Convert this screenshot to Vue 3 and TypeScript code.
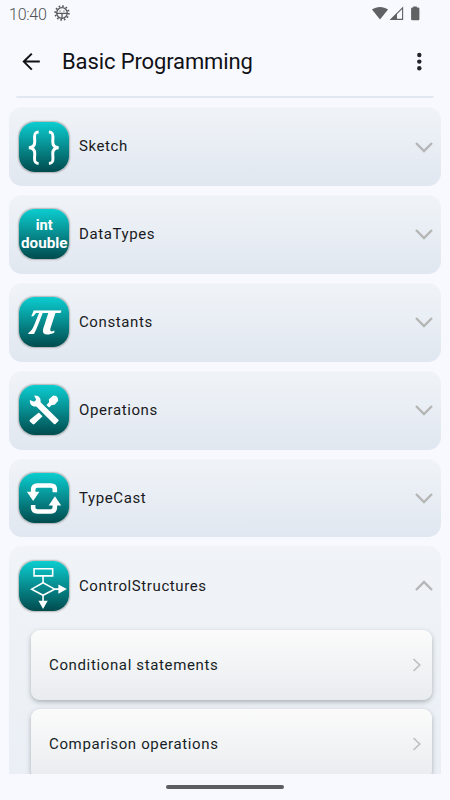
<script setup lang="ts">
import { ref } from 'vue'

type IconName = 'braces' | 'types' | 'pi' | 'tools' | 'cast' | 'flow'

interface Section {
  title: string
  icon: IconName
  items: string[]
}

const sections: Section[] = [
  { title: 'Sketch', icon: 'braces', items: [] },
  { title: 'DataTypes', icon: 'types', items: [] },
  { title: 'Constants', icon: 'pi', items: [] },
  { title: 'Operations', icon: 'tools', items: [] },
  { title: 'TypeCast', icon: 'cast', items: [] },
  {
    title: 'ControlStructures',
    icon: 'flow',
    items: ['Conditional statements', 'Comparison operations'],
  },
]

const open = ref<string>('ControlStructures')

function toggle(title: string): void {
  open.value = open.value === title ? '' : title
}
</script>

<template>
  <div class="screen">
    <div class="status">
      <span class="time">10:40</span>
      <svg class="gear" width="16" height="16" viewBox="0 0 16 16">
        <circle cx="8" cy="8" r="6.8" class="teeth" />
        <circle cx="8" cy="8" r="5.3" class="ring" />
        <path d="M2.7 8.3H13.3M8 8.3V13.3" class="ring" />
        <path d="M5.6 6.2h.9M9.5 6.2h.9" class="ring" />
      </svg>
      <svg class="signals" width="50" height="16" viewBox="0 0 50 16">
        <path d="M0 3.6C4.5 .1 11.5 .1 16 3.6L8 13.6Z" class="solid" />
        <path d="M30.6 1.8V13.4H19Z" class="outline" />
        <path d="M18.2 13.8L25 7V13.8Z" class="solid" />
        <path d="M41.2 1.5V.4H44.8V1.5H46.2Q47.4 1.5 47.4 2.7V13Q47.4 14.2 46.2 14.2H40.3Q39.1 14.2 39.1 13V2.7Q39.1 1.5 40.3 1.5Z" class="solid" />
      </svg>
    </div>

    <header class="bar">
      <svg class="back" width="20" height="20" viewBox="0 0 20 20">
        <path d="M18.8 9.6H2.8M10.8 1.6L2.8 9.6L10.8 17.6" />
      </svg>
      <h1>Basic Programming</h1>
      <svg class="more" width="6" height="20" viewBox="0 0 6 20">
        <circle cx="3.3" cy="3" r="2.2" />
        <circle cx="3.3" cy="9.6" r="2.2" />
        <circle cx="3.3" cy="16.2" r="2.2" />
      </svg>
    </header>

    <main class="list">
      <div class="edge"></div>
      <section v-for="s in sections" :key="s.title" class="card" :class="{ expanded: open === s.title }">
        <div class="head" @click="toggle(s.title)">
          <div class="tile">
            <svg width="50" height="50" viewBox="0 0 50.5 50.5">
              <g v-if="s.icon === 'braces'" class="brace">
                <path d="M19.8 10C16.3 10.3 15.6 12 15.7 15.2L15.9 20C16 24 14 25.8 10 26C14 26.2 16 28 15.9 32L15.7 36.8C15.6 40 16.3 41.7 19.8 42" />
                <path d="M30.2 10C33.7 10.3 34.4 12 34.3 15.2L34.1 20C34 24 36 25.8 40 26C36 26.2 34 28 34.1 32L34.3 36.8C34.4 40 33.7 41.7 30.2 42" />
              </g>
              <g v-else-if="s.icon === 'types'" class="words">
                <text x="25.5" y="21.4">int</text>
                <text x="25.5" y="39" textLength="47" lengthAdjust="spacingAndGlyphs">double</text>
              </g>
              <text v-else-if="s.icon === 'pi'" class="pi" transform="translate(23.6 37.8) skewX(-8) scale(1.04 1)">π</text>
              <g v-else-if="s.icon === 'tools'">
                <path class="fill" d="M11 15.2L15.3 17L17.4 14.8L15.4 10.8C19.5 10.2 22.4 13.2 21.8 17.4L39.8 35.2Q40.4 35.8 39.8 36.4L36.8 39.4Q36 40 35.3 39.4L17.5 21.7C13.6 22.5 10.4 19.3 11 15.2Z" />
                <path class="fill" d="M20 27.8L23.8 31.6L15.6 39.4Q14.6 40.2 13.7 39.4L11 36.8Q10.2 36 11 35.1Z" />
                <path class="fill" d="M27.7 20.2L30.4 17.3L30.2 14.3L34.6 10.7L37.6 11.1L39.2 13.1L39.6 15.8L36 20L33 20.1L30.4 22.8Z" />
              </g>
              <g v-else-if="s.icon === 'cast'">
                <path class="loop" d="M14.3 20V17Q14.3 12.7 18.6 12.7H32.2Q36.2 12.7 36.2 16.6V19.4" />
                <path class="loop" d="M36.2 32V34.7Q36.2 38.8 32.2 38.8H18.6Q14.3 38.8 14.3 35V32.4" />
                <path class="fill" d="M8 19H20.6L14.3 28.4Z" />
                <path class="fill" d="M30 32.8H42.6L36.3 23.4Z" />
              </g>
              <g v-else>
                <path class="line" d="M15.2 7.8H34V15H15.2ZM24.3 15V22L36 28.4L24.3 34.6L12.8 28.4L24.3 22M36 28.4H41M24.3 34.6V41" />
                <path class="fill" d="M39.8 23.7L48.3 28.4L39.8 33.1Z" />
                <path class="fill" d="M19.6 40.2H29L24.3 48.6Z" />
              </g>
            </svg>
          </div>
          <h2>{{ s.title }}</h2>
          <svg class="chevron" width="20" height="12" viewBox="0 0 20 12">
            <path :d="open === s.title ? 'M2 10L10 2L18 10' : 'M2 2L10 10L18 2'" />
          </svg>
        </div>
        <div v-if="open === s.title" class="items">
          <div v-for="item in s.items" :key="item" class="item">
            <span>{{ item }}</span>
            <svg class="next" width="10" height="14" viewBox="0 0 10 14">
              <path d="M1.5 1L7.7 7L1.5 13" />
            </svg>
          </div>
        </div>
      </section>
    </main>

    <footer class="nav"><div class="pill"></div></footer>
  </div>
</template>

<style>
body {
  margin: 0;
  background: #f8f9ff;
}
</style>

<style scoped>
.screen {
  display: flex;
  flex-direction: column;
  width: 450px;
  height: 800px;
  overflow: hidden;
  background: #f8f9ff;
  font-family: Roboto, "Liberation Sans", sans-serif;
  color: #191a22;
}
svg {
  display: block;
  fill: none;
  overflow: visible;
}
.status {
  display: flex;
  align-items: center;
  flex: none;
  height: 27px;
  padding: 0 28px 1px 9px;
  box-sizing: border-box;
  color: #505154;
}
.time {
  width: 45px;
  padding-top: 2px;
  font-size: 16px;
  font-weight: 350;
  letter-spacing: -0.25px;
}
.ring {
  stroke: #56575a;
  stroke-width: 1.3;
}
.teeth {
  stroke: #56575a;
  stroke-width: 1.8;
  stroke-dasharray: 1.6 1.96;
}
.signals {
  margin: 1px 0 0 auto;
}
.solid {
  fill: #606163;
}
.outline {
  stroke: #606163;
  stroke-width: 1.1;
}
.bar {
  display: flex;
  align-items: center;
  flex: none;
  height: 69px;
  padding: 0 28px 0 21px;
  box-sizing: border-box;
}
.back path {
  stroke: #101116;
  stroke-width: 2;
}
h1 {
  margin: 0 0 0 21px;
  font-size: 22px;
  font-weight: 370;
  line-height: 28px;
  letter-spacing: -0.12px;
  white-space: nowrap;
  color: #101116;
}
.more {
  margin-left: auto;
  fill: #23232c;
}
.list {
  display: flex;
  flex-direction: column;
  gap: 9px;
  flex: none;
  height: 678px;
  padding: 0 9px;
  box-sizing: border-box;
  overflow: hidden;
}
.edge {
  flex: none;
  height: 2px;
  margin: 0 7px;
  border-radius: 0 0 6px 6px;
  background: #e2e8f1;
}
.card {
  flex: none;
  height: 78.9px;
  border-radius: 13px;
  background: linear-gradient(#f0f4f8, #e1e7f0);
}
.card.expanded {
  height: 620px;
}
.head {
  display: flex;
  align-items: center;
  height: 79px;
  padding: 0 7px 0 10px;
}
.card.expanded .head {
  height: 80px;
}
.tile {
  width: 50px;
  height: 50px;
  border-radius: 16px;
  background: linear-gradient(#0bcdd0, #07898c 52%, #004b4e);
  box-shadow: 0 0 1.5px 0.5px rgba(90, 85, 80, 0.4);
}
.brace path {
  stroke: #fff;
  stroke-width: 3;
}
.words text {
  fill: #fff;
  font-size: 14.8px;
  font-weight: 700;
  text-anchor: middle;
}
.pi {
  fill: #fff;
  font-family: "Liberation Serif", serif;
  font-size: 52px;
  font-style: italic;
  font-weight: 700;
  text-anchor: middle;
}
.fill {
  fill: #fff;
}
.loop {
  stroke: #fff;
  stroke-width: 4.6;
}
.line {
  stroke: #fff;
  stroke-width: 1.6;
}
h2 {
  margin: 0 0 1px 10px;
  font-size: 15px;
  font-weight: 450;
  letter-spacing: 0.6px;
}
.chevron {
  margin: 0 0 0 auto;
}
.chevron path {
  stroke: #b6b6b7;
  stroke-width: 2.4;
}
.items {
  display: flex;
  flex-direction: column;
  gap: 9px;
  padding: 3.4px 9px 0 22px;
}
.item {
  display: flex;
  align-items: center;
  justify-content: space-between;
  height: 70px;
  padding: 0 10px 0 18px;
  box-sizing: border-box;
  border-radius: 9px;
  background: linear-gradient(#fbfbfb, #e9ecef);
  box-shadow: 0 2px 5px rgba(60, 70, 80, 0.38);
  color: #161f26;
  font-size: 15px;
  font-weight: 370;
  letter-spacing: 0.64px;
}
.next path {
  stroke: #c0c0c0;
  stroke-width: 1.7;
}
.nav {
  display: flex;
  justify-content: center;
  padding-top: 11px;
}
.pill {
  width: 118px;
  height: 4px;
  border-radius: 2px;
  background: #5d5e61;
}
</style>
